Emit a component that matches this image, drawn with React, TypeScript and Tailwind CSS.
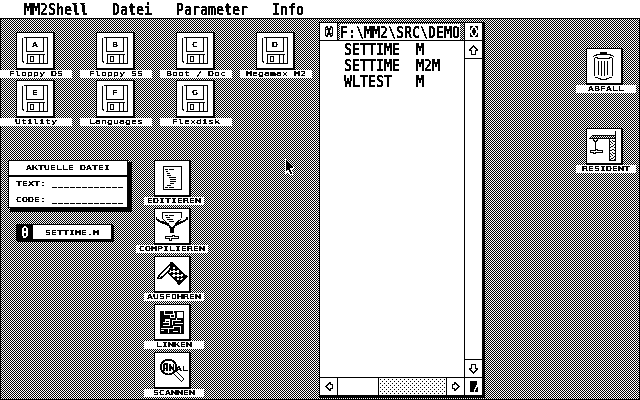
import React from "react";

const small =
  "font-['DejaVu_Sans_Mono','Liberation_Mono',monospace] leading-[8px] whitespace-pre";
const big =
  "font-['DejaVu_Sans_Mono','Liberation_Mono',monospace] font-bold text-[13.29px] leading-[13px] whitespace-pre";

function Small({ children }: { children: string }) {
  return (
    <span className={`${small} block origin-[0_7px] -translate-y-px scale-y-[0.7] text-[9.97px] [-webkit-text-stroke:0.18px_currentColor]`}>
      {children}
    </span>
  );
}

function Blank() {
  return (
    <span className={`${small} block h-2 -translate-y-px text-[8.3px] tracking-[1px] [-webkit-text-stroke:0.25px_currentColor]`}>
      ____________
    </span>
  );
}

function Big({ children }: { children: string }) {
  return (
    <span className="block h-4 pt-[2px]">
      <span className={`${big} block origin-[0_11px] translate-y-px scale-y-[1.18]`}>{children}</span>
    </span>
  );
}

function Draw({ children, w = 34, h = 34 }: { children: React.ReactNode; w?: number; h?: number }) {
  return (
    <svg
      width={w}
      height={h}
      viewBox={`0 0 ${w} ${h}`}
      fill="none"
      stroke="#000"
      strokeWidth="1"
      shapeRendering="crispEdges"
      className="block"
    >
      {children}
    </svg>
  );
}

function Floppy({ letter }: { letter: string }) {
  return (
    <div className="relative">
      <Draw w={36} h={35}>
        <path d="M6.5 4.5H30.5V30.5H8.5M5.5 5V28.5M6.5 28V30M9.5 5V18.5H26.5V5M10.5 30V21.5H28M10.5 21.5V30M22.5 22V30M26.5 22V30M30.5 5V30" />
        <path d="M13.5 23.5H16.5V28.5H13.5Z" />
      </Draw>
      <div className="absolute left-[15px] top-[8px]">
        <Small>{letter}</Small>
      </div>
    </div>
  );
}

function Editor() {
  return (
    <Draw>
      <path d="M8.5 5.5H26.5V28.5H8.5Z" />
      <path d="M10 8.5H13M14 8.5H19M11 10.5H13M12 12.5H15M12 14.5H16M14 16.5H21M15 18.5H21M15 20.5H21M15 22.5H19M12 24.5H16M10 26.5H13M14 26.5H19" />
    </Draw>
  );
}

function Compiler() {
  return (
    <Draw>
      <path d="M7.5 10V3.5H26.5V9M10 6.5H13M14 6.5H19M11 8.5H15M12 10.5H18M14 12.5H19" />
      <path d="M1.5 8V10L4 12L14 16.500L16 19V24M32 8V10L29 12L20 16.500L18 19V24" strokeWidth="1.8" />
      <path d="M8 10L13 15M26 10L20 15M16 19H19M16 21H18M6 12L14 15M28 12L20 15" />
      <path d="M10.5 27.500H17.500V26.500H19.500V27.500H23.500V29.500H16.500V31.500H14.500V29.500H10.5Z" />
    </Draw>
  );
}

function Flag() {
  return (
    <Draw>
      <defs>
        <pattern id="check" width="5.4" height="5.4" patternUnits="userSpaceOnUse" patternTransform="translate(17 7) rotate(44)">
          <rect width="5.4" height="5.4" fill="#fff" stroke="none" />
          <path d="M0 0H3.100V3.100H0ZM2.500 2.500H5.400V5.400H2.500Z" fill="#000" stroke="none" />
        </pattern>
      </defs>
      <path d="M17 6L31.500 19.500L24 27L13.500 16Z" fill="url(#check)" strokeWidth="1.5" />
      <path d="M16.500 5.500L3.500 19.500L3 21.500H5.500L19 8.500" strokeWidth="1.5" />
    </Draw>
  );
}

function Linker() {
  return (
    <Draw>
      <rect x="5" y="6" width="24" height="23" fill="#000" stroke="none" />
      <g stroke="#fff">
        <path d="M10 9.500H15.500V12.500H19.500V8M8 17.500H10.500V14.500H14.500V20.500H8M17 15.500H26M17.500 16V20M20 18.500H28M6 23.500H13.500V28M13 23.500H18.500V21.500H25.500V28M17.500 26.500H23M9.500 6V10" />
        <path d="M22.500 7.500H27.500V12.500H22.500Z" fill="#fff" />
        <path d="M18.500 6V9M11 15.500H14M11 17.500H14M15 9.500H19M21.500 13V16M6 25.500H9" />
      </g>
      <path d="M23 6.500H28.500V12.500" />
    </Draw>
  );
}

function Scanner() {
  return (
    <div className="relative">
      <Draw>
        <circle cx="13.5" cy="14" r="7.500" strokeWidth="2" />
        <path d="M18.500 20.500L21 18L29 26L26.500 28.500Z" fill="#fff" strokeWidth="1.2" />
        <path d="M9 18V12L10 11H12V18M9 15.500H12M15 18V11M15 12L18 17M18.500 18V11" strokeWidth="1.8" />
      </Draw>
      <div className="absolute left-[21px] top-[12px]">
        <Small>AL</Small>
      </div>
    </div>
  );
}

function Bin() {
  return (
    <Draw>
      <path d="M13.500 5V3.500H19.500V5M9 5.500H24M7 6.500H10M23 6.500H26M6.500 7V8M26.500 7V8M8 8.500H11M22 8.500H25M10 9.500H23M7.500 9V27M25.500 9V27M8 28.500H11M22 28.500H25M11 29.500H14M19 29.500H22M13 30.500H20M11.500 12V26M14.500 12V27M17.500 12V27M20.500 12V26" />
      <path d="M14 4.500H19" />
    </Draw>
  );
}

function Crane() {
  return (
    <Draw>
      <path d="M28.500 2V31.500H22.500V10M2.500 9.500L5.500 6.500H28M2 9.500H28" />
      <path d="M5 8.500H28M6 7.500H28" strokeDasharray="1 1" />
      <path d="M23.500 12V31M25.500 11V31M27.500 12V31" strokeDasharray="1 2" />
      <path d="M24.500 13V31M26.500 12V31" strokeDasharray="1 3" />
      <path d="M6 10.500L8.500 13L11 10.500M8.500 12V20" />
      <path d="M3.500 21.500H8.500V20.500H10.500V21.500H15.500V23.500H8.500V24.500H6.500V23.500H3.500Z" />
    </Draw>
  );
}

type Item = { x: number; y: number; w: number; dx: number; label: string; icon: React.ReactNode };

function DeskIcon({ x, y, w, dx, label, icon }: Item) {
  return (
    <div className="absolute flex flex-col items-start" style={{ left: x, top: y, width: w }}>
      <div className="border-t border-l border-b-2 border-r-2 border-black bg-white" style={{ marginLeft: dx }}>
        {icon}
      </div>
      <div className="flex h-2 w-full justify-center bg-white">
        <Small>{label}</Small>
      </div>
    </div>
  );
}

const drives: [string, string, number, number][] = [
  ["A", "Floppy DS", 0, 0],
  ["B", "Floppy SS", 80, 0],
  ["C", "Boot / Doc", 160, 0],
  ["D", "Megamax M2", 240, 0],
  ["E", "Utility", 0, 48],
  ["F", "Languages", 80, 48],
  ["G", "Flexdisk", 160, 48],
];

const items: Item[] = [
  ...drives.map(([l, label, x, y]) => ({
    x,
    y: 32 + y,
    w: 72,
    dx: 16,
    label,
    icon: <Floppy letter={l} />,
  })),
  { x: 144, y: 160, w: 60, dx: 10, label: "EDITIEREN", icon: <Editor /> },
  { x: 136, y: 208, w: 72, dx: 18, label: "COMPILIEREN", icon: <Compiler /> },
  { x: 144, y: 256, w: 60, dx: 10, label: "AUSFüHREN", icon: <Flag /> },
  { x: 144, y: 304, w: 60, dx: 10, label: "LINKEN", icon: <Linker /> },
  { x: 144, y: 352, w: 60, dx: 10, label: "SCANNEN", icon: <Scanner /> },
  { x: 576, y: 48, w: 60, dx: 10, label: "ABFALL", icon: <Bin /> },
  { x: 576, y: 128, w: 60, dx: 10, label: "RESIDENT", icon: <Crane /> },
];

const arrows = {
  up: "M4 0H5V1H6V2H7V3H8V4H9V6H7V10H2V6H0V4H1V3H2V2H3V1H4ZM4 2V3H3V4H2V5H3V9H6V5H7V4H6V3H5V2Z",
  down: "M4 10H5V9H6V8H7V7H8V6H9V4H7V0H2V4H0V6H1V7H2V8H3V9H4ZM4 8V7H3V6H2V5H3V1H6V5H7V6H6V7H5V8Z",
  left: "M0 4V5H1V6H2V7H3V8H4V9H6V7H8V2H6V0H4V1H3V2H2V3H1V4ZM2 4H3V3H4V2H5V3H7V6H5V7H4V6H3V5H2Z",
  right: "M8 4V5H7V6H6V7H5V8H4V9H2V7H0V2H2V0H4V1H5V2H6V3H7V4ZM6 4H5V3H4V2H3V3H1V6H3V7H4V6H5V5H6Z",
};

function Arrow({ to }: { to: keyof typeof arrows }) {
  const tall = to === "up" || to === "down";
  return (
    <svg width={tall ? 9 : 8} height={tall ? 10 : 9} fillRule="evenodd" shapeRendering="crispEdges">
      <path d={arrows[to]} />
    </svg>
  );
}

function FileWindow() {
  return (
    <div className="absolute left-[319px] top-[22px] flex h-[376px] w-[166px] flex-col border-t border-l border-r-[3px] border-b-[3px] border-black bg-white">
      <div className="flex h-[18px] border-b border-black">
        <div className="flex w-[18px] items-center justify-center border-r border-black">
          <svg width="8" height="11" viewBox="0 0 8 11" shapeRendering="crispEdges">
            <path d="M1 0H3V2H5V0H7V2H6V4H5V7H6V9H7V11H5V9H3V11H1V9H2V7H3V4H2V2H1ZM0 1H1V10H0ZM7 1H8V10H7ZM1 3H2V4H1ZM6 7H7V8H6Z" />
          </svg>
        </div>
        <div className="relative w-[127px] border-r border-black">
          <svg width="126" height="17" className="block" shapeRendering="crispEdges">
            <rect width="126" height="17" fill="url(#desk)" />
          </svg>
          <div className="absolute left-[2px] top-[1px] h-[16px] w-[120px] bg-white">
            <Big>{"F:\\MM2\\SRC\\DEMO"}</Big>
          </div>
        </div>
        <div className="flex w-[17px] items-center justify-center">
          <svg width="8" height="11" viewBox="0 0 8 11" shapeRendering="crispEdges">
            <path d="M0 0H3V1H2V2H1V4H0ZM5 0H8V4H7V2H6V1H5ZM3 2H5V4H6V7H5V9H3V7H2V4H3ZM0 7H1V9H2V10H3V11H0ZM7 7H8V11H5V10H6V9H7Z" />
          </svg>
        </div>
      </div>
      <div className="flex h-[337px] border-b border-black">
        <div className="w-[145px] border-r border-black pl-6">
          <Big>SETTIME  M</Big>
          <Big>SETTIME  M2M</Big>
          <Big>WLTEST   M</Big>
        </div>
        <div className="flex w-[17px] flex-col">
          <div className="flex h-[18px] items-center justify-center border-b border-black">
            <Arrow to="up" />
          </div>
          <div className="h-[301px] border-b border-black" />
          <div className="flex h-[17px] items-center justify-center">
            <Arrow to="down" />
          </div>
        </div>
      </div>
      <div className="flex h-[17px]">
        <div className="flex w-[18px] items-center justify-center border-r border-black">
          <Arrow to="left" />
        </div>
        <div className="w-[41px] border-r border-black" />
        <div className="w-[68px] border-r border-black">
          <svg width="67" height="17" className="block" shapeRendering="crispEdges">
            <rect width="67" height="17" fill="url(#dots)" />
          </svg>
        </div>
        <div className="flex w-[18px] items-center justify-center border-r border-black">
          <Arrow to="right" />
        </div>
        <div className="flex w-[17px] items-center justify-center">
          <svg width="8" height="11" viewBox="0 0 8 11" shapeRendering="crispEdges">
            <path d="M0 0H7V4H6V6H5V8H4V11H0ZM7 6H8V11H5V9H6V7H7Z" />
          </svg>
        </div>
      </div>
    </div>
  );
}

export default function App() {
  return (
    <div className="relative flex h-[400px] w-[640px] flex-col overflow-hidden bg-white text-black [filter:url(#mono)]">
      <svg width="0" height="0" className="absolute">
        <defs>
          <filter id="mono" colorInterpolationFilters="sRGB" x="0" y="0" width="100%" height="100%">
            <feComponentTransfer>
              <feFuncR type="discrete" tableValues="0 0 0 1 1" />
              <feFuncG type="discrete" tableValues="0 0 0 1 1" />
              <feFuncB type="discrete" tableValues="0 0 0 1 1" />
            </feComponentTransfer>
          </filter>
          <pattern id="desk" width="2" height="2" patternUnits="userSpaceOnUse">
            <rect width="2" height="2" fill="#fff" />
            <path d="M0 0H1V1H0ZM1 1H2V2H1Z" fill="#000" />
          </pattern>
          <pattern id="dots" width="4" height="4" patternUnits="userSpaceOnUse">
            <path d="M1 1H2V2H1ZM3 3H4V4H3Z" fill="#000" />
          </pattern>
        </defs>
      </svg>
      <header className="flex h-[18px] items-start gap-6 pl-6 pt-px">
        <Big>MM2Shell</Big>
        <Big>Datei</Big>
        <Big>Parameter</Big>
        <Big>Info</Big>
      </header>
      <main className="h-[382px] border border-black">
        <svg width="638" height="380" className="block" shapeRendering="crispEdges">
          <rect width="638" height="380" fill="url(#desk)" />
        </svg>
      </main>

      {items.map((it) => (
        <DeskIcon key={it.label} {...it} />
      ))}

      <section className="absolute left-2 top-[160px] flex h-[48px] w-[120px] flex-col border border-black bg-white shadow-[3px_3px_0_1px_#000]">
        <div className="flex h-[16px] justify-center border-b-2 border-black pt-[3px]">
          <Small>AKTUELLE DATEI</Small>
        </div>
        <div className="flex flex-col gap-2 pl-[7px] pt-[3px]">
          <div className="flex h-2">
            <Small>TEXT: </Small>
            <Blank />
          </div>
          <div className="flex h-2">
            <Small>CODE: </Small>
            <Blank />
          </div>
        </div>
      </section>

      <section className="absolute left-4 top-[224px] flex h-[16px] w-[96px] border border-black bg-white shadow-[1.5px_1.5px_0_0.5px_#000]">
        <div className="flex w-[16px] justify-center bg-black text-white">
          <div className="-mt-px">
            <Big>0</Big>
          </div>
        </div>
        <div className="pl-3 pt-1">
          <Small>SETTIME.M</Small>
        </div>
      </section>

      <FileWindow />

      <svg className="absolute left-[285px] top-[159px]" width="10" height="17" viewBox="0 0 10 17" shapeRendering="crispEdges">
        <path d="M0 0H2L9 8V10H7V12H8V16H5L3 13L0 15Z" fill="#fff" />
        <path d="M1 1L8 8V9H5V11H6V13H7V15H5V13H4V11H3L1 12Z" fill="#000" />
      </svg>
    </div>
  );
}
